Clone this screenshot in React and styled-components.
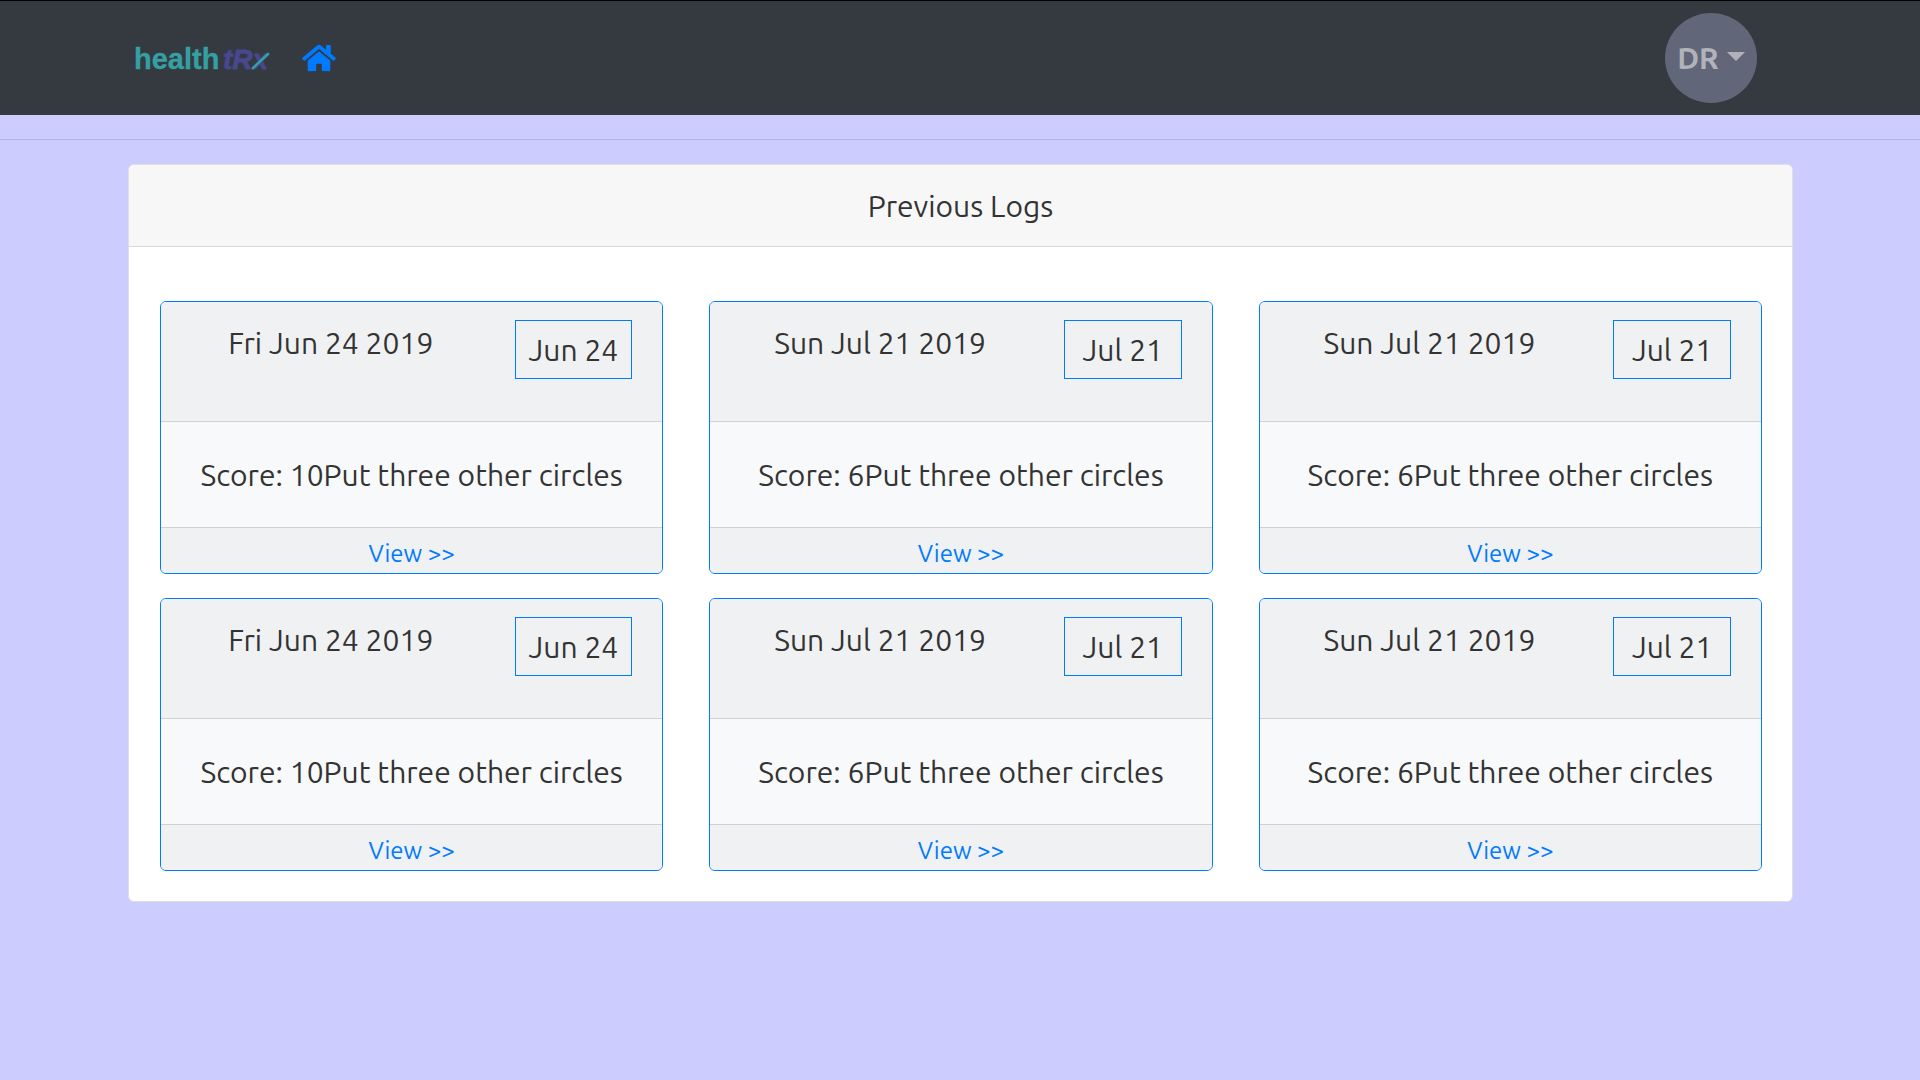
import styled, { createGlobalStyle } from 'styled-components';
import { FaHome } from 'react-icons/fa';

const GlobalStyle = createGlobalStyle`
  * {
    box-sizing: border-box;
  }
  body {
    margin: 0;
    background-color: #ccccff;
    color: #333333;
    font-family: Ubuntu, "Noto Sans", sans-serif;
    font-size: 30px;
    line-height: 47px;
  }
`;

const Container = styled.div`
  width: 100%;
  max-width: 1710px;
  margin: 0 auto;
  padding: 0 22px 0 23px;
`;

const Navbar = styled.nav`
  background-color: #343a40;
  border-top: 1px solid #000;
  padding: 12px 0;
`;

const NavContent = styled(Container)`
  display: flex;
  align-items: center;
  gap: 30px;
  padding: 0 58px 0 28px;
`;

const NavLink = styled.a`
  display: flex;
  color: #007bff;
`;

const Logo = styled.svg`
  font-family: "Liberation Sans", sans-serif;
  font-size: 28px;
  font-weight: bold;
  stroke-linejoin: round;
  stroke-linecap: round;
`;

const HomeIcon = styled(FaHome)`
  width: 34px;
  height: 30px;
`;

const UserButton = styled.button`
  display: flex;
  align-items: center;
  justify-content: center;
  gap: 8px;
  width: 92px;
  height: 90px;
  margin-left: auto;
  padding: 0;
  border: none;
  border-radius: 50%;
  background-color: #626679;
  color: #b1b2ba;
  font: inherit;
  font-weight: bold;
`;

const Caret = styled.span`
  margin-bottom: 3px;
  border-top: 9px solid;
  border-left: 9px solid transparent;
  border-right: 9px solid transparent;
`;

const Divider = styled.hr`
  margin: 24px 0;
  border: none;
  border-top: 1px solid #b4b4e4;
`;

const Panel = styled.section`
  background-color: #fff;
  border: 1px solid #dfdfdf;
  border-radius: 6px;
  overflow: hidden;
`;

const PanelTitle = styled.h1`
  margin: 0;
  padding: 18px 30px 16px;
  background-color: #f7f7f7;
  border-bottom: 1px solid #d8d8d8;
  font-size: inherit;
  font-weight: normal;
  text-align: center;
`;

const LogGrid = styled.div`
  display: grid;
  grid-template-columns: repeat(3, 1fr);
  gap: 24px 46px;
  padding: 54px 30px 30px 31px;
`;

const Card = styled.article`
  background-color: #f8f9fa;
  border: 1px solid #007bff;
  border-radius: 6px;
  overflow: hidden;
  text-align: center;
`;

const CardHeader = styled.header`
  display: grid;
  grid-template-columns: 2fr 1fr;
  align-items: start;
  min-height: 120px;
  padding: 18px 8px;
  background-color: #f0f1f2;
  border-bottom: 1px solid #d0d1d2;
`;

const DateBox = styled.div`
  margin: 0 22px;
  padding: 6px 0 4px;
  border: 1px solid #007bff;
  white-space: nowrap;
`;

const CardBody = styled.div`
  padding: 30px 0 28px;
  white-space: nowrap;
`;

const CardFooter = styled.footer`
  padding-top: 6px;
  border-top: 1px solid #d0d1d2;
  background-color: #f0f1f2;
  font-size: 24px;
  line-height: 39px;
`;

const ViewLink = styled.a`
  color: #007bff;
  text-decoration: none;
`;

const logs = [
  { date: 'Fri Jun 24 2019', day: 'Jun 24', score: 10 },
  { date: 'Sun Jul 21 2019', day: 'Jul 21', score: 6 },
  { date: 'Sun Jul 21 2019', day: 'Jul 21', score: 6 },
  { date: 'Fri Jun 24 2019', day: 'Jun 24', score: 10 },
  { date: 'Sun Jul 21 2019', day: 'Jul 21', score: 6 },
  { date: 'Sun Jul 21 2019', day: 'Jul 21', score: 6 },
];

function LogCard({ log }) {
  return (
    <Card>
      <CardHeader>
        <div>{log.date}</div>
        <DateBox>{log.day}</DateBox>
      </CardHeader>
      <CardBody>Score: {log.score}Put three other circles</CardBody>
      <CardFooter>
        <ViewLink href="#">View &gt;&gt;</ViewLink>
      </CardFooter>
    </Card>
  );
}

export default function App() {
  return (
    <>
      <GlobalStyle />
      <Navbar>
        <NavContent>
          <NavLink href="#">
            <Logo width="139" height="40" viewBox="0 0 139 40">
              <text x="1" y="31" fontSize="29" fill="#35a0a3" stroke="#35a0a3" strokeWidth="0.3">health</text>
              <text x="90" y="31" fill="#48478f" stroke="#48478f" strokeWidth="0.8" fontStyle="italic">tRx</text>
              <line x1="120" y1="30" x2="135" y2="16" stroke="#35a0a3" strokeWidth="2.6" />
            </Logo>
          </NavLink>
          <NavLink href="#" aria-label="Home">
            <HomeIcon />
          </NavLink>
          <UserButton type="button">
            DR
            <Caret />
          </UserButton>
        </NavContent>
      </Navbar>
      <Divider />
      <Container as="main">
        <Panel>
          <PanelTitle>Previous Logs</PanelTitle>
          <LogGrid>
            {logs.map((log, i) => (
              <LogCard key={i} log={log} />
            ))}
          </LogGrid>
        </Panel>
      </Container>
    </>
  );
}
